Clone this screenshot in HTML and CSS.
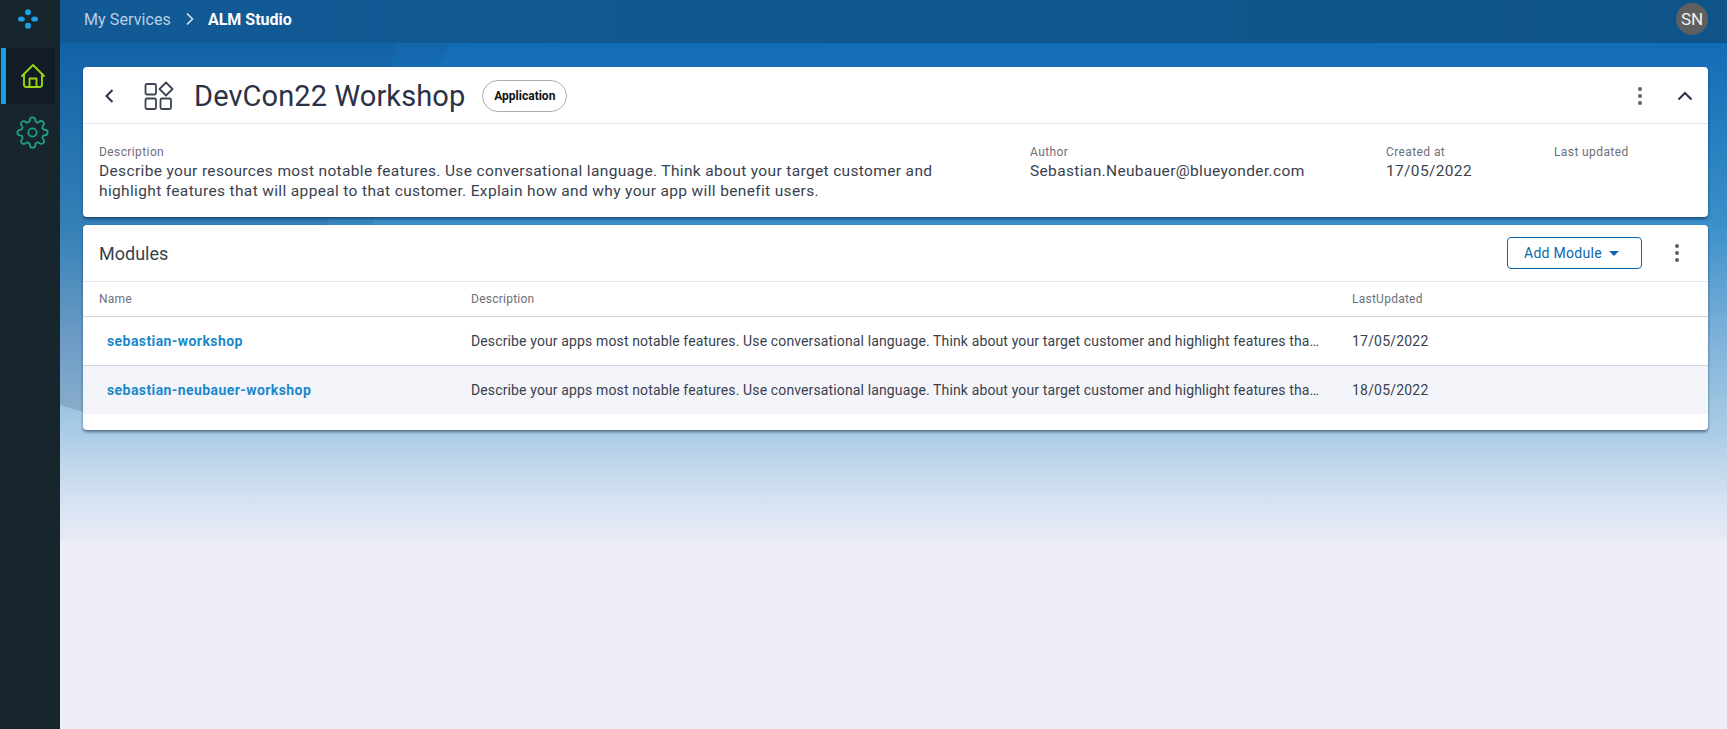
FILE: index.html
```html
<!DOCTYPE html>
<html lang="en">
    <head>
        <meta charset="UTF-8" />
        <title>ALM Studio</title>
        <link rel="stylesheet" href="styles.css">
    </head>
    <body>
        <nav class="sidebar">
            <div class="logo">
                <svg width="20" height="20" viewBox="0 0 20 20">
                    <circle cx="10" cy="3.2" r="3" fill="#1ba2e6" />
                    <circle cx="10" cy="16.8" r="3" fill="#1ba2e6" />
                    <ellipse cx="3.4" cy="10" rx="3.4" ry="2.6" fill="#1ba2e6" />
                    <ellipse cx="16.6" cy="10" rx="3.4" ry="2.6" fill="#1ba2e6" />
                </svg>
            </div>
            <div class="nav-item active">
                <svg width="26" height="26" viewBox="0 0 26 26" fill="none" stroke="#97d50f" stroke-width="1.9" stroke-linejoin="round" stroke-linecap="round">
                    <path d="M2 13 L13 2 L24 13" />
                    <path d="M4 11 V21.5 Q4 24 6.5 24 H19.5 Q22 24 22 21.5 V11" />
                    <path d="M9.5 24 V15.5 H16.5 V24" />
                </svg>
            </div>
            <div class="nav-item">
                <svg width="33" height="33" viewBox="0 0 24 24" fill="none" stroke="#1f9c8a" stroke-width="1.35" stroke-linejoin="round">
                    <circle cx="12" cy="12" r="3" />
                    <path d="M19.4 15a1.65 1.65 0 0 0 .33 1.82l.06.06a2 2 0 0 1 0 2.83 2 2 0 0 1-2.83 0l-.06-.06a1.65 1.65 0 0 0-1.82-.33 1.65 1.65 0 0 0-1 1.51V21a2 2 0 0 1-2 2 2 2 0 0 1-2-2v-.09A1.65 1.65 0 0 0 9 19.4a1.65 1.65 0 0 0-1.82.33l-.06.06a2 2 0 0 1-2.83 0 2 2 0 0 1 0-2.83l.06-.06a1.65 1.65 0 0 0 .33-1.82 1.65 1.65 0 0 0-1.51-1H3a2 2 0 0 1-2-2 2 2 0 0 1 2-2h.09A1.65 1.65 0 0 0 4.6 9a1.65 1.65 0 0 0-.33-1.82l-.06-.06a2 2 0 0 1 0-2.83 2 2 0 0 1 2.83 0l.06.06a1.65 1.65 0 0 0 1.82.33H9a1.65 1.65 0 0 0 1-1.51V3a2 2 0 0 1 2-2 2 2 0 0 1 2 2v.09a1.65 1.65 0 0 0 1 1.51 1.65 1.65 0 0 0 1.82-.33l.06-.06a2 2 0 0 1 2.83 0 2 2 0 0 1 0 2.83l-.06.06a1.65 1.65 0 0 0-.33 1.82V9a1.65 1.65 0 0 0 1.51 1H21a2 2 0 0 1 2 2 2 2 0 0 1-2 2h-.09a1.65 1.65 0 0 0-1.51 1z" />
                </svg>
            </div>
        </nav>
        <div class="main">
            <header class="topbar">
                <span class="crumb">My Services</span>
                <svg class="crumb-sep" width="10" height="14" viewBox="0 0 10 14" fill="none" stroke="#d5e3f0" stroke-width="1.6"><path d="M2 1.5 L7.5 7 L2 12.5" /></svg>
                <span class="crumb-current">ALM Studio</span>
                <span class="avatar">SN</span>
            </header>
            <main class="content">
                <section class="card">
                    <div class="app-head">
                        <svg class="back" width="12" height="16" viewBox="0 0 12 16" fill="none" stroke="#2c3245" stroke-width="2"><path d="M9.5 2 L3.5 8 L9.5 14" /></svg>
                        <svg class="app-icon" width="30" height="30" viewBox="0 0 30 30" fill="none" stroke="#3d4354" stroke-width="1.8" stroke-linejoin="round">
                            <rect x="1.5" y="3" width="10.5" height="10.5" rx="1.5" />
                            <rect x="1.5" y="17.5" width="10.5" height="10.5" rx="1.5" />
                            <rect x="16.5" y="17.5" width="10.5" height="10.5" rx="1.5" />
                            <path d="M22 1.5 L28.5 8 L22 14.5 L15.5 8 Z" />
                        </svg>
                        <h1 class="app-title">DevCon22 Workshop</h1>
                        <span class="pill">Application</span>
                        <span class="spacer"></span>
                        <span class="kebab"><i></i><i></i><i></i></span>
                        <svg class="collapse" width="16" height="10" viewBox="0 0 16 10" fill="none" stroke="#2c3245" stroke-width="2"><path d="M1.5 8.5 L8 2 L14.5 8.5" /></svg>
                    </div>
                    <div class="app-info">
                        <div class="info-desc">
                            <div class="label">Description</div>
                            <div class="value">Describe your resources most notable features. Use conversational language. Think about your target customer and highlight features that will appeal to that customer. Explain how and why your app will benefit users.</div>
                        </div>
                        <div class="info-author">
                            <div class="label">Author</div>
                            <div class="value">Sebastian.Neubauer@blueyonder.com</div>
                        </div>
                        <div class="info-created">
                            <div class="label">Created at</div>
                            <div class="value">17/05/2022</div>
                        </div>
                        <div class="info-updated">
                            <div class="label">Last updated</div>
                        </div>
                    </div>
                </section>
                <section class="card card-modules">
                    <div class="modules-head">
                        <h2 class="modules-title">Modules</h2>
                        <button class="add-btn">Add Module<span class="caret"></span></button>
                        <span class="kebab"><i></i><i></i><i></i></span>
                    </div>
                    <div class="row row-head">
                        <div class="col-name">Name</div>
                        <div class="col-desc">Description</div>
                        <div class="col-date">LastUpdated</div>
                    </div>
                    <div class="row">
                        <div class="col-name"><a class="module-link">sebastian-workshop</a></div>
                        <div class="col-desc">Describe your apps most notable features. Use conversational language. Think about your target customer and highlight features tha…</div>
                        <div class="col-date">17/05/2022</div>
                    </div>
                    <div class="row row-alt">
                        <div class="col-name"><a class="module-link">sebastian-neubauer-workshop</a></div>
                        <div class="col-desc">Describe your apps most notable features. Use conversational language. Think about your target customer and highlight features tha…</div>
                        <div class="col-date">18/05/2022</div>
                    </div>
                </section>
            </main>
        </div>
    </body>
</html>
```

FILE: styles.css
```css
* {
    box-sizing: border-box;
}

html, body {
    height: 100%;
}

body {
    margin: 0;
    display: flex;
    font-family: Roboto, sans-serif;
    color: #2c3245;
    background-color: #edeef7;
    overflow: hidden;
}

.sidebar {
    width: 60px;
    flex-shrink: 0;
    background-color: #17252d;
}

.logo {
    height: 39px;
    margin-bottom: 9px;
    padding: 9px 0 0 18px;
}

.nav-item {
    width: 54px;
    height: 56px;
    margin-left: 1px;
    display: flex;
    align-items: center;
    justify-content: center;
    padding-left: 4px;
    border-left: 5px solid transparent;
}

.nav-item.active {
    background-color: #131c25;
    border-left-color: #159fe6;
}

.main {
    position: relative;
    flex: 1;
    min-width: 0;
    background: linear-gradient(180deg, #126cb5 43px, #3b90c9 225px, #7fb2da 340px, #a9cbe5 430px, #d0dff0 490px, #e8eaf6 539px, #edeef7 540px);
}

/* the two darker swooshes behind the cards */
.main::before,
.main::after {
    content: "";
    position: absolute;
    inset: 0;
    background-color: rgba(20, 50, 100, 0.09);
}

.main::before {
    clip-path: path("M0 43 H390 C365 105 340 170 313 222 C280 320 180 420 90 420 C60 420 30 415 0 405 Z");
}

.main::after {
    clip-path: path("M0 43 H337 C320 100 295 170 268 222 C220 320 120 420 90 420 C60 420 30 415 0 405 Z");
}

.topbar {
    position: relative;
    z-index: 1;
    height: 43px;
    display: flex;
    align-items: center;
    padding: 0 19px 5px 24px;
    background: linear-gradient(90deg, #125a96, #0e5489);
    font-size: 16px;
}

.crumb {
    color: #b9cfe2;
    letter-spacing: 0.1px;
}

.crumb-sep {
    margin: 0 13px 0 14px;
}

.crumb-current {
    color: #fff;
    font-weight: 700;
}

.avatar {
    margin-left: auto;
    width: 32px;
    height: 32px;
    border-radius: 50%;
    background-color: #5f5f5f;
    color: #f2f2f2;
    font-size: 17px;
    display: flex;
    align-items: center;
    justify-content: center;
}

.content {
    position: relative;
    z-index: 1;
    padding: 24px 19px 0 23px;
}

.card {
    background-color: #fff;
    border-radius: 4px;
    box-shadow: 0 2px 3px rgba(10, 30, 60, 0.55);
    margin-bottom: 8px;
}

.card-modules {
    padding-bottom: 16px;
}

.app-head {
    height: 57px;
    display: flex;
    align-items: center;
    border-bottom: 1px solid #e4e5ea;
    padding: 1px 15px 0 20px;
}

.back {
    margin-right: 29px;
}

.app-icon {
    margin-right: 20px;
}

.app-title {
    margin: 0;
    font-size: 29px;
    font-weight: 400;
    letter-spacing: 0.1px;
    color: #2c3245;
}

.pill {
    margin-left: 17px;
    height: 32px;
    width: 85px;
    border: 1px solid #aeaeae;
    border-radius: 16px;
    font-size: 12px;
    font-weight: 700;
    color: #111;
    display: flex;
    align-items: center;
    justify-content: center;
}

.spacer {
    flex: 1;
}

.kebab {
    display: flex;
    flex-direction: column;
    gap: 3px;
}

.kebab i {
    width: 4px;
    height: 4px;
    border-radius: 50%;
    background-color: #5f6068;
}

.app-head .kebab {
    margin-right: 35px;
}

.app-info {
    height: 93px;
    display: flex;
    padding: 19px 16px 0;
}

.label {
    font-size: 12px;
    line-height: 18px;
    letter-spacing: 0.4px;
    color: #6d6f7a;
}

.value {
    font-size: 15.5px;
    line-height: 20px;
    letter-spacing: 0.35px;
    color: #3a3f4e;
}

.info-desc {
    width: 931px;
    padding-right: 60px;
}

.info-author {
    width: 356px;
}

.info-created {
    width: 168px;
}

.modules-head {
    height: 57px;
    display: flex;
    align-items: center;
    border-bottom: 1px solid #e4e5ea;
    padding: 0 29px 0 16px;
}

.modules-title {
    margin: 0 auto 0 0;
    font-size: 18px;
    font-weight: 400;
    color: #3a3f4e;
}

.add-btn {
    width: 135px;
    height: 32px;
    margin-right: 33px;
    padding: 0 6px 0 0;
    border: 1px solid #0c66ad;
    border-radius: 4px;
    background-color: #fff;
    color: #0c66ad;
    font-family: inherit;
    font-size: 14px;
    letter-spacing: 0.3px;
    display: flex;
    align-items: center;
    justify-content: center;
}

.caret {
    margin-left: 7px;
    border-left: 5px solid transparent;
    border-right: 5px solid transparent;
    border-top: 5px solid #0c66ad;
}

.row {
    display: flex;
    align-items: center;
    height: 49px;
    border-bottom: 1px solid #d2d3da;
    padding-left: 16px;
    font-size: 14px;
    color: #3a3f4e;
    letter-spacing: 0.2px;
}

.row-head {
    height: 35px;
    font-size: 12px;
    color: #6d6f7a;
    letter-spacing: 0.25px;
}

.row-alt {
    height: 48px;
    border-bottom: 0;
    background-color: #f4f5fb;
}

.col-name {
    width: 372px;
    flex-shrink: 0;
}

.col-desc {
    width: 881px;
    flex-shrink: 0;
    white-space: nowrap;
    letter-spacing: 0.13px;
}

.row-head .col-desc {
    letter-spacing: inherit;
}

.module-link {
    margin-left: 8px;
    color: #1b88cc;
    font-size: 14px;
    font-weight: 700;
    letter-spacing: 0.42px;
}
```
